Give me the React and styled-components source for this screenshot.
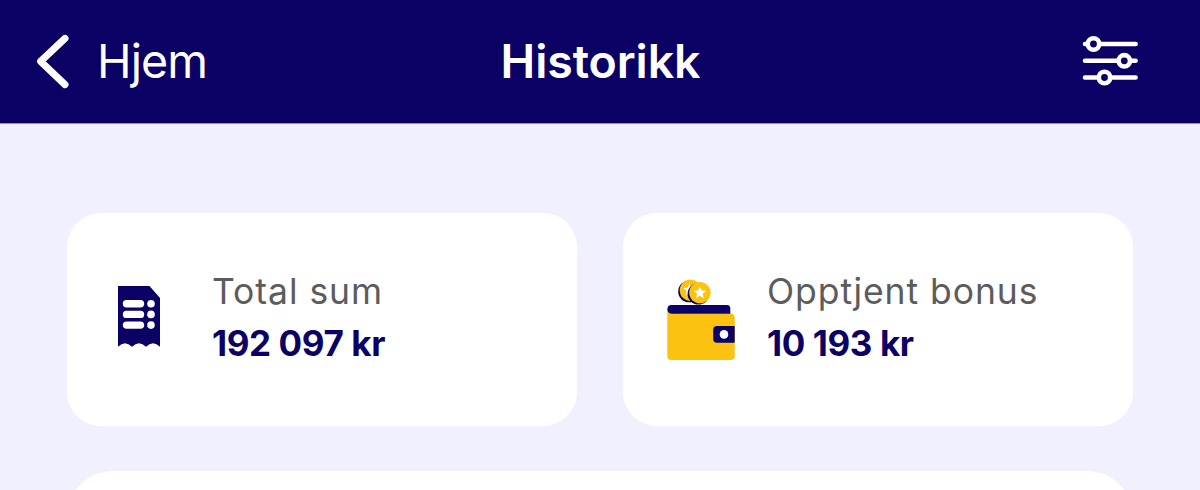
import React from "react";
import styled, { createGlobalStyle } from "styled-components";

const STAR = "M0 -6.4 L1.8 -2.2 L6.2 -2 L2.8 1 L3.9 5.4 L0 3 L-3.9 5.4 L-2.8 1 L-6.2 -2 L-1.8 -2.2 Z";

const BackIcon = () => (
  <svg width="38" height="60" viewBox="34 31 38 60" fill="none" stroke="#fff" strokeWidth="7" strokeLinecap="round" strokeLinejoin="round">
    <path d="M65 38.4 L40.6 61.4 L65 84.6" />
  </svg>
);

const FilterIcon = () => (
  <svg width="60" height="56" viewBox="1080 33 60 56" fill="none" stroke="#fff" strokeWidth="4.6" strokeLinecap="round">
    <path d="M1085 44H1135.6M1085 60.8H1135.6M1085 77.5H1135.6" />
    <g fill="#0b0064">
      <circle cx="1093.5" cy="44" r="5.7" />
      <circle cx="1124.3" cy="60.8" r="5.7" />
      <circle cx="1104.5" cy="77.5" r="5.7" />
    </g>
  </svg>
);

const ReceiptIcon = () => (
  <svg width="42" height="67" viewBox="118 286 42 67">
    <path fill="#0b0064" d="M118 286H149.5L160 298V346.8Q156.5 343.2 153 343.2T146 346.8Q142.5 343.2 139 343.2T132 346.8Q128.5 343.2 125 343.2T118 346.8Z" />
    <g fill="#fff">
      <rect x="122.8" y="300" width="21.4" height="7.4" rx="3.7" />
      <rect x="122.8" y="310.7" width="21.4" height="7.4" rx="3.7" />
      <rect x="122.8" y="321.4" width="21.4" height="7.4" rx="3.7" />
      <circle cx="151" cy="303.7" r="3.8" />
      <circle cx="151" cy="314.4" r="3.8" />
      <circle cx="151" cy="325.1" r="3.8" />
    </g>
  </svg>
);

const WalletIcon = () => (
  <svg width="68" height="82" viewBox="667 279 68 82">
    <circle cx="689" cy="291.5" r="10.8" fill="#0b0064" />
    <circle cx="690.4" cy="290.2" r="10.7" fill="#fcc212" />
    <path d={STAR} transform="translate(689.5 290)" fill="#fff" />
    <circle cx="698.4" cy="293.8" r="10.8" fill="#0b0064" />
    <circle cx="699.9" cy="292.6" r="10.7" fill="#fcc212" />
    <path d={STAR} transform="translate(699.9 292.8)" fill="#fff" />
    <path fill="#fcc212" d="M667.3 309H675L680 313.5H730.7Q734.7 313.5 734.7 318V356Q734.7 360 730.7 360H671.3Q667.3 360 667.3 356Z" />
    <path fill="#0b0064" d="M671.7 305H727Q730.3 305 730.3 308.5V313.7H671.7Q667.4 313.5 667.4 309.3T671.7 305Z" />
    <path fill="#0b0064" d="M717 326H734.7V342.7H717Q713.2 342.7 713.2 339V329.7Q713.2 326 717 326Z" />
    <circle cx="724" cy="334.4" r="4.3" fill="#fff" />
  </svg>
);

const App = () => {
  return (
    <Page>
      <GlobalStyle />
      <Header>
        <Back>
          <BackIcon />
          <BackText>Hjem</BackText>
        </Back>
        <Title>Historikk</Title>
        <Filter>
          <FilterIcon />
        </Filter>
      </Header>
      <Content>
        <Cards>
          <Card>
            <IconBox $width="94px">
              <ReceiptIcon />
            </IconBox>
            <Info>
              <Label>Total sum</Label>
              <Amount>192 097 kr</Amount>
            </Info>
          </Card>
          <Card $left="44px">
            <IconBox $width="100px">
              <WalletIcon />
            </IconBox>
            <Info>
              <Label>Opptjent bonus</Label>
              <Amount>10 193 kr</Amount>
            </Info>
          </Card>
        </Cards>
        <Panel />
      </Content>
    </Page>
  );
};

const GlobalStyle = createGlobalStyle`
  * {
    box-sizing: border-box;
  }

  body {
    margin: 0;
    font-family: Inter, "Liberation Sans", sans-serif;
  }
`;

const Page = styled.div`
  height: 490px;
  overflow: hidden;
  background-color: #f1f0ff;
`;

const Header = styled.header`
  display: grid;
  grid-template-columns: 1fr auto 1fr;
  align-items: center;
  height: 124px;
  padding: 0 33px 2px 34px;
  border-bottom: 1px solid #918cc4;
  background-color: #0b0064;
  color: #fff;
`;

const Back = styled.div`
  display: flex;
  align-items: center;
  gap: 25px;
`;

const BackText = styled.span`
  font-size: 46.5px;
  letter-spacing: -0.9px;
  line-height: 60px;
`;

const Title = styled.h1`
  margin: 0;
  font-size: 46.5px;
  font-weight: 600;
  letter-spacing: -0.1px;
  line-height: 60px;
`;

const Filter = styled.div`
  display: flex;
  justify-content: flex-end;
  padding-right: 27px;
`;

const Content = styled.main`
  padding: 89px 67px 0;
`;

const Cards = styled.div`
  display: grid;
  grid-template-columns: 1fr 1fr;
  gap: 46px;
`;

const Card = styled.section`
  display: flex;
  align-items: center;
  height: 213px;
  padding-left: ${({ $left }) => $left || "51px"};
  border-radius: 34px;
  background-color: #fff;
`;

const IconBox = styled.div`
  display: flex;
  flex-shrink: 0;
  width: ${({ $width }) => $width};
`;

const Info = styled.div`
  padding-bottom: 3px;
  white-space: nowrap;
`;

const Label = styled.p`
  margin: 0;
  color: #5c5c5c;
  font-size: 35.5px;
  line-height: 50px;
  letter-spacing: 0.95px;
`;

const Amount = styled.p`
  margin: 0;
  color: #0b0064;
  font-size: 35px;
  font-weight: 700;
  line-height: 53px;
  letter-spacing: -0.4px;
`;

const Panel = styled.section`
  height: 200px;
  margin-top: 45px;
  border-radius: 46px;
  background-color: #fff;
`;

export default App;
